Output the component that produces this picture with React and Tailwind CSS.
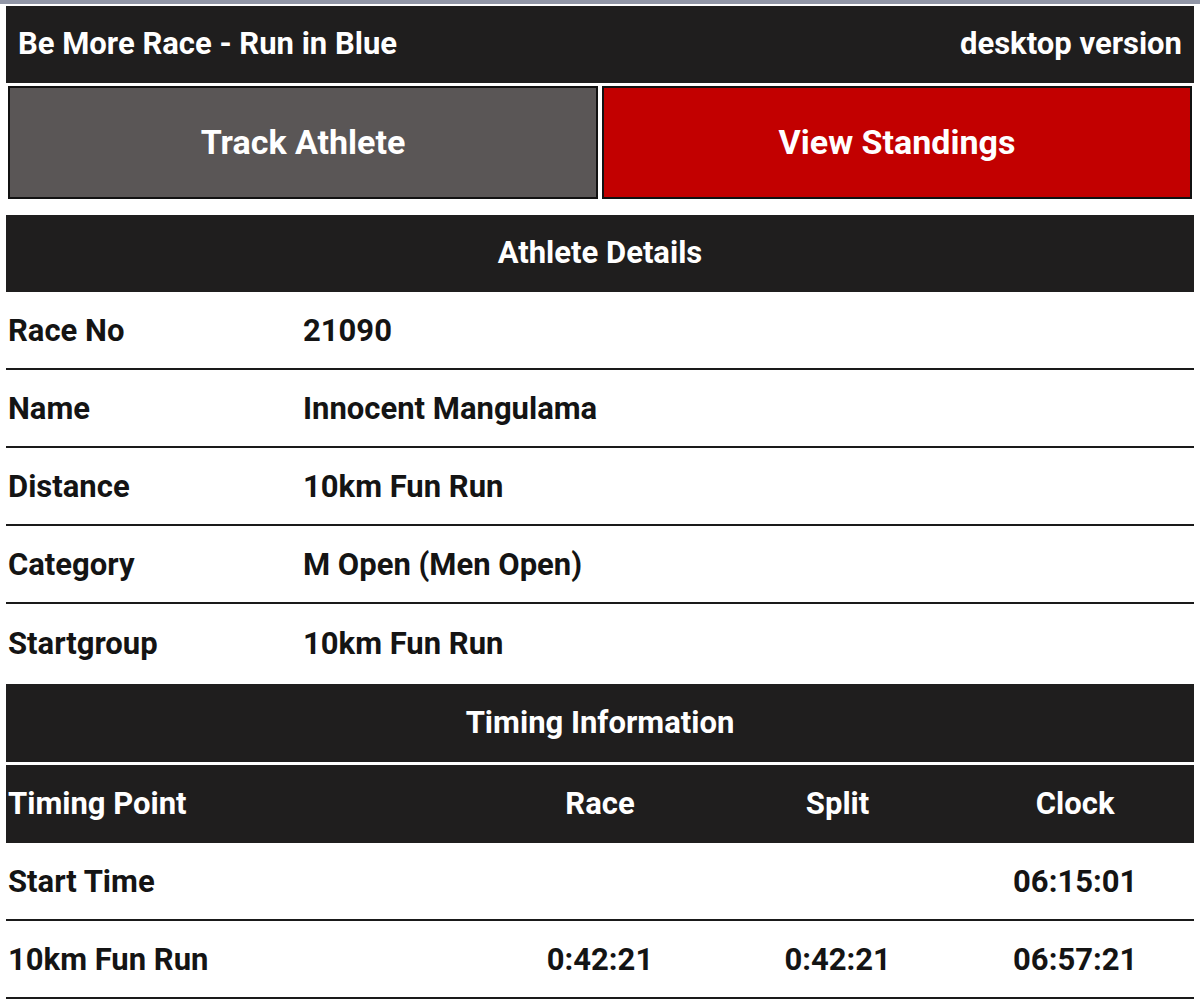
const DETAILS = [
  ["Race No", "21090"],
  ["Name", "Innocent Mangulama"],
  ["Distance", "10km Fun Run"],
  ["Category", "M Open (Men Open)"],
  ["Startgroup", "10km Fun Run"],
];

const SPLITS = [
  { point: "Start Time", race: "", split: "", clock: "06:15:01" },
  { point: "10km Fun Run", race: "0:42:21", split: "0:42:21", clock: "06:57:21" },
];

export default function App() {
  return (
    <div className="w-[1200px] min-h-[1007px] bg-white border-t-4 border-[#9196a6] px-[6px] pt-[2px] font-['Roboto',sans-serif] font-bold text-[#141414]">
      {/* title bar */}
      <div className="h-[77px] bg-[#1f1e1e] flex items-center justify-between pl-3 pr-3 text-white text-[31px]">
        <span>Be More Race - Run in Blue</span>
        <span>desktop version</span>
      </div>

      {/* nav buttons */}
      <div className="flex gap-1 px-[2px] pt-[3px]">
        <div className="flex-1 h-[113px] bg-[#5a5656] border-2 border-[#111] flex items-center justify-center text-white text-[34px]">
          Track Athlete
        </div>
        <div className="flex-1 h-[113px] bg-[#c20000] border-2 border-[#111] flex items-center justify-center text-white text-[34px]">
          View Standings
        </div>
      </div>

      {/* athlete details */}
      <div className="mt-[16px] h-[77px] bg-[#1f1e1e] flex items-center justify-center text-white text-[31px]">
        Athlete Details
      </div>
      {DETAILS.map(([label, value], i) => (
        <div
          key={label}
          className={`h-[78px] flex items-center text-[31px] pt-[2px] ${i < DETAILS.length - 1 ? "border-b-2 border-[#1a1a1a]" : ""}`}
        >
          <span className="w-[297px] pl-[2px]">{label}</span>
          <span>{value}</span>
        </div>
      ))}

      {/* timing info */}
      <div className="mt-[2px] h-[78px] bg-[#1f1e1e] flex items-center justify-center text-white text-[31px]">
        Timing Information
      </div>
      <div className="mt-[3px] h-[78px] bg-[#1f1e1e] grid grid-cols-[40%_20%_20%_20%] items-center text-white text-[31px]">
        <span className="pl-[2px]">Timing Point</span>
        <span className="text-center">Race</span>
        <span className="text-center">Split</span>
        <span className="text-center">Clock</span>
      </div>
      {SPLITS.map((s) => (
        <div
          key={s.point}
          className="h-[78px] grid grid-cols-[40%_20%_20%_20%] items-center text-[31px] pt-[2px] border-b-2 border-[#1a1a1a]"
        >
          <span className="pl-[2px]">{s.point}</span>
          <span className="text-center">{s.race}</span>
          <span className="text-center">{s.split}</span>
          <span className="text-center">{s.clock}</span>
        </div>
      ))}
    </div>
  );
}
